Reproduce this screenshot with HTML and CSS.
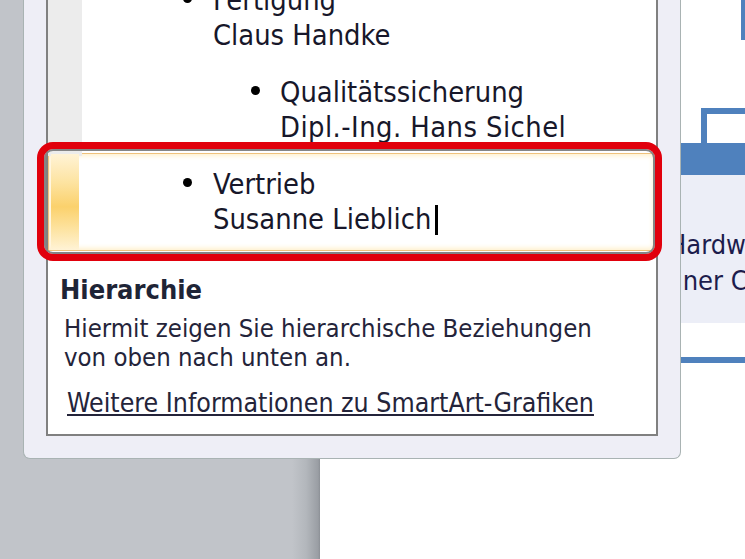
FILE: index.html
```html
<!DOCTYPE html>
<html lang="de">
<head>
<meta charset="utf-8">
<title>SmartArt Textbereich</title>
<link rel="stylesheet" href="styles.css">
</head>
<body>
<div class="stage">
  <div class="desk"></div>
  <div class="slide">
    <div class="shape-bar"></div>
    <div class="shape-frame"></div>
    <div class="card">
      <div class="card-head"></div>
      <div class="card-body">
        <div class="card-line first">Hardware</div>
        <div class="card-line second">einer Computer</div>
      </div>
    </div>
    <div class="card2"></div>
  </div>

  <div class="panel">
    <div class="inner">
      <div class="item">
        <div class="gutter"></div>
        <div class="body lvl1">
          <span class="dot"></span>
          <div class="lines"><div>Fertigung</div><div>Claus Handke</div></div>
        </div>
      </div>
      <div class="item">
        <div class="gutter"></div>
        <div class="body lvl2">
          <span class="dot"></span>
          <div class="lines"><div>Qualitätssicherung</div><div class="wide">Dipl.-Ing. Hans Sichel</div></div>
        </div>
      </div>
      <div class="item selected">
        <div class="gutter"></div>
        <div class="body lvl1">
          <span class="dot"></span>
          <div class="lines"><div>Vertrieb</div><div>Susanne Lieblich<span class="caret"></span></div></div>
        </div>
      </div>
      <div class="desc">
        <div class="desc-title">Hierarchie</div>
        <div class="desc-text">Hiermit zeigen Sie hierarchische Beziehungen<br>von oben nach unten an.</div>
        <div class="desc-link"><a href="#">Weitere Informationen zu SmartArt-Grafiken</a></div>
      </div>
    </div>
  </div>

  <div class="mark"></div>
</div>
</body>
</html>
```

FILE: styles.css
```css
html, body {
  margin: 0;
  padding: 0;
}
body {
  background: #c2c5ca;
  font-family: "DejaVu Sans Condensed", "DejaVu Sans", sans-serif;
  font-stretch: condensed;
}
.stage {
  position: relative;
  width: 745px;
  height: 559px;
  overflow: hidden;
  display: flex;
  background: #c2c5ca;
}
.desk {
  width: 320px;
  flex: none;
  background: linear-gradient(to right, #c1c4c9 0, #c1c4c9 292px, #b3b7bc 306px, #9a9ea4 318px, #8c9096 320px);
}
.slide {
  flex: 1;
  position: relative;
  background: #ffffff;
}
.shape-bar {
  position: absolute;
  left: 421px;
  top: 0;
  width: 20px;
  height: 40px;
  background: #4f81bd;
}
.shape-frame {
  position: absolute;
  left: 381px;
  top: 108px;
  width: 100px;
  height: 60px;
  border: 6px solid #4f81bd;
}
.card {
  position: absolute;
  left: 330px;
  top: 143px;
  width: 200px;
}
.card-head {
  height: 32px;
  background: #4f81bd;
}
.card-body {
  height: 148px;
  box-sizing: border-box;
  padding-top: 52px;
  background: #eceef7;
  font-size: 27px;
  line-height: 36px;
  color: #1c1c4c;
  white-space: nowrap;
}
.card-line.first { margin-left: 18px; }
.card-line.second { margin-left: 11px; }
.card2 {
  position: absolute;
  left: 330px;
  top: 357px;
  width: 200px;
  height: 6px;
  background: #4f81bd;
}

.panel {
  position: absolute;
  left: 23px;
  top: -28px;
  width: 658px;
  box-sizing: border-box;
  padding: 0 22px 22px;
  background: #eeeef6;
  border: 1px solid #a9b3b3;
  border-top: none;
  border-radius: 0 0 7px 7px;
}
.inner {
  background: #ffffff;
  border: 2px solid #808080;
  border-top: none;
}
.item {
  display: flex;
  color: #17172a;
  font-size: 28.8px;
  line-height: 35px;
  white-space: nowrap;
}
.lines .wide {
  letter-spacing: 0.45px;
}
.gutter {
  width: 34px;
  flex: none;
  background: #ececec;
}
.body {
  flex: 1;
  display: flex;
  align-items: flex-start;
  padding-top: 11px;
  padding-bottom: 11px;
}
.body.lvl1 { padding-left: 101px; }
.body.lvl2 { padding-left: 169px; }
.dot {
  flex: none;
  width: 9px;
  height: 9px;
  margin-top: 11px;
  border-radius: 50%;
  background: #000000;
}
.lvl1 .dot { margin-right: 21px; }
.lvl2 .dot { margin-right: 20px; }
.caret {
  display: inline-block;
  width: 3px;
  height: 30px;
  margin-left: 4px;
  vertical-align: -6px;
  background: #000000;
}
.item.selected {
  margin-top: -3px;
  border: 1px solid #efc27c;
  background: #ffffff;
  box-shadow: inset 0 0 5px 2px #fff0cc;
}
.item.selected .gutter {
  width: 28px;
  margin: 0 3px 0 2px;
  background: linear-gradient(to bottom, #fff3d6 0, #fde3a0 30%, #fbd16c 55%, #fde3a0 78%, #fff3d6 100%);
}
.item.selected .body {
  padding-top: 13px;
  padding-bottom: 13px;
  padding-left: 101px;
}

.desc {
  padding: 24px 12px 17px 12px;
  color: #24243a;
  white-space: nowrap;
}
.desc-title {
  font-weight: bold;
  font-size: 27px;
  line-height: 29px;
  color: #1e2436;
}
.desc-text {
  margin-top: 10px;
  padding-left: 4px;
  font-size: 25.5px;
  line-height: 29px;
}
.desc-link {
  margin-top: 16px;
  padding-left: 7px;
  font-size: 26.5px;
  line-height: 29px;
}
.desc-link a {
  color: #24243a;
  text-decoration: underline;
}

.mark {
  position: absolute;
  left: 37px;
  top: 142px;
  width: 625px;
  height: 119px;
  box-sizing: border-box;
  border: 7px solid #e1000c;
  border-radius: 16px;
  box-shadow: inset 0 0 0 2px #858585;
}
```
